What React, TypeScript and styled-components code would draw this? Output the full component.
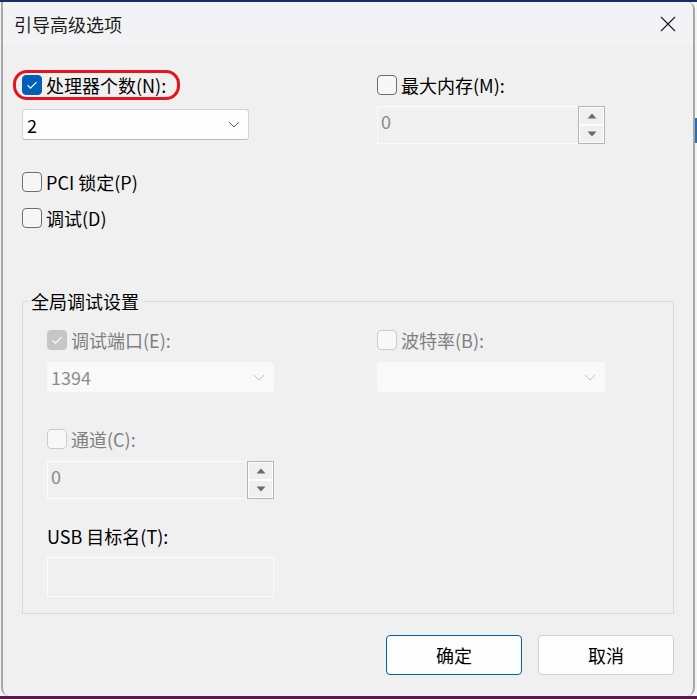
import React from "react";
import styled, { createGlobalStyle } from "styled-components";

const Global = createGlobalStyle`
  html, body { margin: 0; padding: 0; }
  body {
    font-family: "Noto Sans CJK SC", "Noto Sans", sans-serif;
    background: #f5f5f5;
  }
  * { box-sizing: border-box; }
`;

const Frame = styled.div`
  width: 697px;
  height: 699px;
  border-top: 2px solid #1f2b63;
  border-bottom: 3px solid #5a1c4e;
  padding: 0 2px 0 1px;
  background: linear-gradient(#2b6cb0, #2b6cb0) right 116px / 2px 25px no-repeat, #f5f5f5;
  display: flex;
`;

const Window = styled.div`
  flex: 1;
  display: flex;
  flex-direction: column;
  background: #f0f0f0;
  border-left: 2px solid #a7a7a7;
  border-right: 2px solid #a7a7a7;
  border-radius: 0 8px 8px 8px;
  overflow: hidden;
`;

const TitleBar = styled.div`
  height: 43px;
  flex: none;
  background: #f3f3f5;
  display: flex;
  align-items: center;
  justify-content: space-between;
  padding-left: 11px;
`;

const Title = styled.span`
  font-size: 18px;
  line-height: 24px;
  color: #1c1c1c;
  padding-top: 1px;
`;

const CloseButton = styled.div`
  width: 50px;
  height: 43px;
  display: flex;
  align-items: center;
  justify-content: center;
`;

const Body = styled.div`
  padding: 30px 19px 0 19px;
  display: flex;
  flex-direction: column;
`;

const TwoCols = styled.div<{ $gap: number }>`
  display: grid;
  grid-template-columns: 227px 228px;
  column-gap: ${(p) => p.$gap}px;
  align-items: start;
`;

const Stack = styled.div<{ $gap: number; $top?: number }>`
  display: flex;
  flex-direction: column;
  align-items: stretch;
  gap: ${(p) => p.$gap}px;
  margin-top: ${(p) => p.$top ?? 0}px;
`;

const OptionList = styled.div`
  display: flex;
  flex-direction: column;
  align-items: flex-start;
  gap: 16px;
  margin-top: 28px;
`;

const CheckRow = styled.label`
  position: relative;
  display: flex;
  align-items: center;
  gap: 4px;
  height: 20px;
`;

const Box = styled.span<{ $checked?: boolean; $disabled?: boolean }>`
  width: 20px;
  height: 20px;
  flex: none;
  border-radius: 4px;
  display: flex;
  align-items: center;
  justify-content: center;
  border: 1px solid
    ${(p) =>
      p.$checked
        ? p.$disabled
          ? "#c6c6c6"
          : "#005fb8"
        : p.$disabled
        ? "#cbcbcb"
        : "#6e6e6e"};
  background: ${(p) =>
    p.$checked ? (p.$disabled ? "#c6c6c6" : "#005fb8") : p.$disabled ? "#f8f8f8" : "#f7f7f7"};
`;

const Label = styled.span<{ $disabled?: boolean }>`
  font-size: 18px;
  line-height: 24px;
  color: ${(p) => (p.$disabled ? "#7f7f7f" : "#000")};
  white-space: nowrap;
`;

const Annotation = styled.span`
  position: absolute;
  left: -9px;
  top: -5px;
  width: 167px;
  height: 30px;
  border: 3px solid #e8141c;
  border-radius: 14px;
  pointer-events: none;
`;

const Select = styled.div<{ $disabled?: boolean }>`
  width: 100%;
  height: ${(p) => (p.$disabled ? 30 : 31)}px;
  display: flex;
  align-items: center;
  justify-content: space-between;
  padding: 0 8px 0 ${(p) => (p.$disabled ? 3 : 4)}px;
  border-radius: 3px;
  background: ${(p) => (p.$disabled ? "#f9f9f9" : "#fdfdfd")};
  border: 1px solid ${(p) => (p.$disabled ? "#f9f9f9" : "#d3d3d3")};
  border-bottom-color: ${(p) => (p.$disabled ? "#f9f9f9" : "#bcbcbc")};
  font-size: 18px;
  line-height: 24px;
  color: ${(p) => (p.$disabled ? "#8d8d8d" : "#000")};
`;

const Spin = styled.div`
  width: 100%;
  height: 38px;
  display: flex;
`;

const SpinEdit = styled.div`
  flex: 1;
  border: 1px solid #fbfbfb;
  border-right: none;
  background: #f0f0f0;
  padding: 3px 0 0 3px;
  font-size: 18px;
  line-height: 22px;
  color: #8a8a8a;
`;

const SpinButtons = styled.div`
  width: 27px;
  border: 1px solid #b4b4b4;
  display: flex;
  flex-direction: column;
`;

const SpinButton = styled.div`
  flex: 1;
  border: 1px solid #fcfcfc;
  background: #f0f0f0;
  display: flex;
  align-items: center;
  justify-content: center;
`;

const TextBox = styled.div`
  width: 100%;
  height: 40px;
  border: 1px solid #fbfbfb;
  background: #f0f0f0;
`;

const Group = styled.fieldset`
  margin: 61px 0 0 0;
  padding: 0;
  border: 1px solid #dadada;
  min-width: 0;
`;

const Legend = styled.legend`
  margin-left: 5px;
  padding: 0 3px;
  font-size: 18px;
  line-height: 24px;
  color: #000;
`;

const GroupInner = styled.div`
  padding: 17px 0 16px 24px;
`;

const ButtonRow = styled.div`
  display: flex;
  justify-content: flex-end;
  gap: 16px;
  margin-top: 21px;
`;

const Button = styled.button<{ $primary?: boolean }>`
  width: 136px;
  height: 40px;
  border-radius: 4px;
  border: 1px solid ${(p) => (p.$primary ? "#005fb8" : "#d0d0d0")};
  background: #fdfdfd;
  font-family: inherit;
  font-size: 18px;
  line-height: 24px;
  color: #000;
  padding: 0;
`;

const CheckMark = () => (
  <svg width="14" height="14" viewBox="0 0 14 14">
    <path d="M2.5 7.2 L5.5 10.2 L11.5 4.2" fill="none" stroke="#fff" strokeWidth="1.2" />
  </svg>
);

const Chevron = ({ color }: { color: string }) => (
  <svg width="12" height="7" viewBox="0 0 12 7">
    <path d="M1 1 L6 6 L11 1" fill="none" stroke={color} strokeWidth="1" />
  </svg>
);

const Tri = ({ up }: { up?: boolean }) => (
  <svg width="10" height="6" viewBox="0 0 10 6">
    <polygon points={up ? "0.5,5.5 9.5,5.5 5,0.5" : "0.5,0.5 9.5,0.5 5,5.5"} fill="#6a6a6a" />
  </svg>
);

const Check = ({
  label,
  checked,
  disabled,
  annotated,
}: {
  label: string;
  checked?: boolean;
  disabled?: boolean;
  annotated?: boolean;
}) => (
  <CheckRow>
    <Box $checked={checked} $disabled={disabled}>
      {checked && <CheckMark />}
    </Box>
    <Label $disabled={disabled}>{label}</Label>
    {annotated && <Annotation />}
  </CheckRow>
);

const Spinner = ({ value }: { value: string }) => (
  <Spin>
    <SpinEdit>{value}</SpinEdit>
    <SpinButtons>
      <SpinButton>
        <Tri up />
      </SpinButton>
      <SpinButton>
        <Tri />
      </SpinButton>
    </SpinButtons>
  </Spin>
);

export default function App() {
  return (
    <>
      <Global />
      <Frame>
        <Window>
          <TitleBar>
            <Title>引导高级选项</Title>
            <CloseButton>
              <svg width="16" height="16" viewBox="0 0 16 16">
                <path d="M1 1 L15 15 M15 1 L1 15" stroke="#1a1a1a" strokeWidth="1.1" />
              </svg>
            </CloseButton>
          </TitleBar>
          <Body>
            <TwoCols $gap={128}>
              <Stack $gap={14}>
                <Check label="处理器个数(N):" checked annotated />
                <Select>
                  <span>2</span>
                  <Chevron color="#5f5f5f" />
                </Select>
              </Stack>
              <Stack $gap={11}>
                <Check label="最大内存(M):" />
                <Spinner value="0" />
              </Stack>
            </TwoCols>
            <OptionList>
              <Check label="PCI 锁定(P)" />
              <Check label="调试(D)" />
            </OptionList>
            <Group>
              <Legend>全局调试设置</Legend>
              <GroupInner>
                <TwoCols $gap={103}>
                  <Stack $gap={12}>
                    <Check label="调试端口(E):" checked disabled />
                    <Select $disabled>
                      <span>1394</span>
                      <Chevron color="#c2c2c2" />
                    </Select>
                  </Stack>
                  <Stack $gap={12}>
                    <Check label="波特率(B):" disabled />
                    <Select $disabled>
                      <span />
                      <Chevron color="#c2c2c2" />
                    </Select>
                  </Stack>
                </TwoCols>
                <TwoCols $gap={103}>
                  <Stack $gap={12} $top={37}>
                    <Check label="通道(C):" disabled />
                    <Spinner value="0" />
                    <Stack $gap={9} $top={13}>
                      <Label>USB 目标名(T):</Label>
                      <TextBox />
                    </Stack>
                  </Stack>
                </TwoCols>
              </GroupInner>
            </Group>
            <ButtonRow>
              <Button $primary>确定</Button>
              <Button>取消</Button>
            </ButtonRow>
          </Body>
        </Window>
      </Frame>
    </>
  );
}
